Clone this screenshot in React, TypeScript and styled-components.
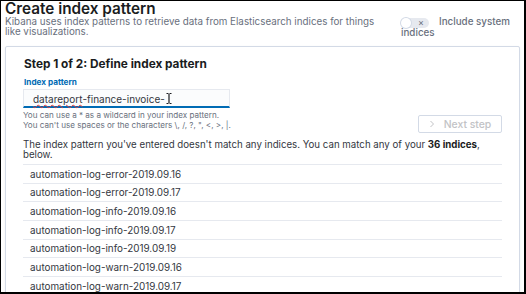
import React from "react";
import styled, { createGlobalStyle } from "styled-components";

const Global = createGlobalStyle`
  html, body { margin: 0; padding: 0; background: #ffffff; }
  * { box-sizing: border-box; }
`;

const Frame = styled.div`
  width: 526px;
  height: 294px;
  overflow: hidden;
  background: #ffffff;
  border-style: solid;
  border-color: #000000;
  border-width: 1px 2px 2px 1px;
  font-family: Inter, "Noto Sans", sans-serif;
  color: #343741;
  padding: 0 0 0 4px;
`;

const Header = styled.div`
  display: flex;
  justify-content: space-between;
  align-items: flex-start;
  padding-right: 11px;
`;

const TitleBlock = styled.div`
  display: flex;
  flex-direction: column;
`;

const Title = styled.h1`
  margin: 0;
  font-size: 15.3px;
  line-height: 16px;
  font-weight: 600;
  color: #1a1c21;
`;

const Subtitle = styled.p`
  margin: 0;
  font-size: 9.8px;
  line-height: 10px;
  color: #69707d;
  width: 380px;
`;

const SwitchBlock = styled.div`
  width: 112px;
  margin-top: 16px;
  font-size: 9.8px;
  line-height: 10px;
  font-weight: 500;
  color: #69707d;
`;

const Switch = styled.span`
  display: inline-flex;
  align-items: center;
  justify-content: flex-end;
  position: relative;
  width: 28px;
  height: 10px;
  border-radius: 5px;
  background: #e6e9ef;
  margin-right: 10px;
  vertical-align: -1px;
  padding-right: 5px;
  font-size: 9px;
  font-weight: 400;
  color: #69707d;
  &::before {
    content: "";
    position: absolute;
    left: 0;
    top: 0;
    width: 10px;
    height: 10px;
    border-radius: 50%;
    background: #ffffff;
    box-shadow: 0 0 0 1px #d3dae6;
  }
`;

const Panel = styled.div`
  margin-top: 8px;
  width: 515px;
  border: 1px solid #d3dae6;
  border-radius: 2px;
  box-shadow: 0 1px 3px rgba(0, 0, 0, 0.06);
  padding: 10px 17px 0 17px;
  background: #ffffff;
  height: 260px;
`;

const StepTitle = styled.h2`
  margin: 0 0 0 1px;
  font-size: 11.8px;
  line-height: 14px;
  font-weight: 700;
  color: #1a1c21;
`;

const Label = styled.label`
  display: block;
  margin: 6px 0 0 1px;
  font-size: 8.2px;
  line-height: 10px;
  font-weight: 700;
  color: #006bb4;
`;

const Input = styled.div`
  margin-top: 2px;
  width: 207px;
  height: 19px;
  background: #fbfcfd;
  border: 1px solid #e6e9ef;
  border-bottom: 2px solid #006bb4;
  padding: 1px 9px 0;
  display: flex;
  align-items: center;
  font-size: 10px;
  color: #343741;
  white-space: nowrap;
`;

const Misspelled = styled.span`
  text-decoration: underline wavy #e23b3b;
  text-decoration-thickness: 1px;
  text-underline-offset: 1px;
`;

const HelpRow = styled.div`
  display: flex;
  justify-content: space-between;
  align-items: flex-start;
  margin-top: 2px;
`;

const Help = styled.div`
  font-size: 8.1px;
  line-height: 10px;
  color: #69707d;
`;

const NextButton = styled.button`
  width: 84px;
  height: 18px;
  margin-top: 5px;
  border: 1px solid #d3dae6;
  border-radius: 2px;
  background: #ffffff;
  color: #c2c3c6;
  font-family: inherit;
  font-size: 10.4px;
  font-weight: 500;
  display: flex;
  align-items: center;
  justify-content: center;
  gap: 9px;
  padding: 0;
`;

const Status = styled.p`
  margin: 7px 0 0;
  font-size: 9.7px;
  line-height: 10px;
  color: #343741;
  b { font-weight: 700; color: #1a1c21; }
`;

const List = styled.ul`
  list-style: none;
  margin: 4px 0 0;
  padding: 0;
  border-top: 1px solid #e6e9ef;
`;

const Row = styled.li`
  height: 18.67px;
  border-bottom: 1px solid #e6e9ef;
  display: flex;
  align-items: center;
  padding-left: 7px;
  font-size: 9.9px;
  color: #343741;
`;

const indices = [
  "automation-log-error-2019.09.16",
  "automation-log-error-2019.09.17",
  "automation-log-info-2019.09.16",
  "automation-log-info-2019.09.17",
  "automation-log-info-2019.09.19",
  "automation-log-warn-2019.09.16",
  "automation-log-warn-2019.09.17",
];

const IBeam = () => (
  <svg width="6" height="11" viewBox="0 0 6 11" style={{ marginLeft: 1 }}>
    <path d="M0.5 0.5 H2.5 M3.5 0.5 H5.5 M3 1 V10 M0.5 10.5 H2.5 M3.5 10.5 H5.5" stroke="#1a1c21" strokeWidth="1.2" fill="none" />
  </svg>
);

const Chevron = () => (
  <svg width="6" height="8" viewBox="0 0 6 8">
    <path d="M1.5 1 L4.5 4 L1.5 7" stroke="#c2c3c6" strokeWidth="1" fill="none" />
  </svg>
);

export default function App() {
  return (
    <>
      <Global />
      <Frame>
        <Header>
          <TitleBlock>
            <Title>Create index pattern</Title>
            <Subtitle>
              Kibana uses index patterns to retrieve data from Elasticsearch indices for things like visualizations.
            </Subtitle>
          </TitleBlock>
          <SwitchBlock>
            <Switch>×</Switch>Include system indices
          </SwitchBlock>
        </Header>
        <Panel>
          <StepTitle>Step 1 of 2: Define index pattern</StepTitle>
          <Label>Index pattern</Label>
          <Input>
            <Misspelled>datareport</Misspelled>-finance-invoice-
            <IBeam />
          </Input>
          <HelpRow>
            <Help>
              You can use a * as a wildcard in your index pattern.
              <br />
              You can't use spaces or the characters \, /, ?, ", &lt;, &gt;, |.
            </Help>
            <NextButton>
              <Chevron />
              Next step
            </NextButton>
          </HelpRow>
          <Status>
            The index pattern you've entered doesn't match any indices. You can match any of your <b>36 indices</b>, below.
          </Status>
          <List>
            {indices.map((name) => (
              <Row key={name}>{name}</Row>
            ))}
          </List>
        </Panel>
      </Frame>
    </>
  );
}
